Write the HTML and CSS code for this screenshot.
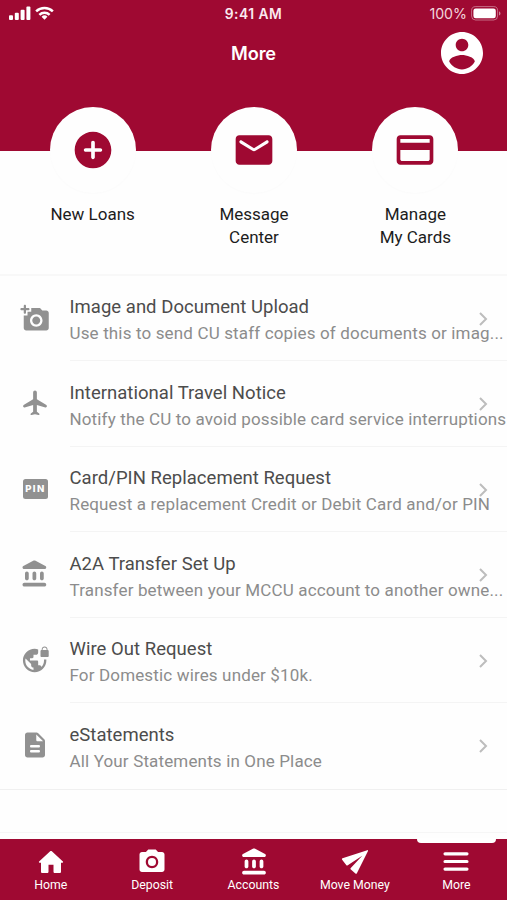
FILE: index.html
```html
<!DOCTYPE html>
<html lang="en">
<head>
  <meta charset="UTF-8" />
  <meta name="viewport" content="width=device-width, initial-scale=1.0"/>
  <title>More</title>
  <link rel="stylesheet" href="styles.css">
</head>
<body>

<div class="app">
  <header class="header">
    <div class="status">
      <div class="status-left">
        <svg class="signal" viewBox="0 0 22 14"><rect x="0" y="9.3" width="4" height="4.7" rx="1"/><rect x="5.8" y="6.8" width="4" height="7.2" rx="1"/><rect x="11.6" y="3.8" width="4" height="10.2" rx="1"/><rect x="17.4" y="0.6" width="4" height="13.4" rx="1"/></svg>
        <svg class="wifi" viewBox="0 0 20 14"><g fill="none" stroke="#fff" stroke-width="2.6"><path d="M1.2 5.4a12.6 12.6 0 0 1 17.6 0"/><path d="M4.6 8.9a7.8 7.8 0 0 1 10.8 0"/></g><path d="M10 14l-3.1-3.1a4.5 4.5 0 0 1 6.2 0z"/></svg>
      </div>
      <div class="time">9:41 AM</div>
      <div class="status-right">
        <span>100%</span>
        <svg class="battery" viewBox="0 0 30 15"><rect x="0.6" y="0.6" width="26" height="13.4" rx="4" fill="none" stroke="#fff" stroke-opacity=".4"/><rect x="2.4" y="2.4" width="22.4" height="9.8" rx="2.3"/><path d="M28 5.2v4.4c2-.8 2-3.6 0-4.4z" opacity=".5"/></svg>
      </div>
    </div>
    <div class="title-bar">
      <h1 class="title">More</h1>
      <svg class="profile" viewBox="2 2 20 20"><path d="M12 2C6.480 2 2 6.480 2 12s4.480 10 10 10 10-4.480 10-10S17.520 2 12 2zm0 3.200c1.660 0 3 1.340 3 3s-1.340 3-3 3-3-1.340-3-3 1.340-3 3-3zm0 14.600c-2.600 0-4.900-1.400-6.100-3.700.1-2 4.100-3.100 6.100-3.100s6 1.100 6.100 3.100c-1.200 2.300-3.500 3.700-6.100 3.700z"/></svg>
    </div>
  </header>

  <!-- Shortcuts -->
  <section class="shortcuts">
    <div class="shortcut">
      <div class="circle"><svg viewBox="0 0 24 24"><path d="M12 2C6.480 2 2 6.480 2 12s4.480 10 10 10 10-4.480 10-10S17.520 2 12 2zm4 11h-3v3c0 .55-.45 1-1 1s-1-.45-1-1v-3H8c-.55 0-1-.45-1-1s.45-1 1-1h3V8c0-.55.45-1 1-1s1 .45 1 1v3h3c.55 0 1 .45 1 1s-.45 1-1 1z"/></svg></div>
      <div class="shortcut-label">New Loans</div>
    </div>
    <div class="shortcut">
      <div class="circle"><svg viewBox="0 0 24 24"><path d="M20 4H4c-1.100 0-2 .9-2 2v12c0 1.100.9 2 2 2h16c1.100 0 2-.9 2-2V6c0-1.100-.9-2-2-2zm-.4 4.250l-6.540 4.090c-.65.41-1.470.41-2.120 0L4.400 8.250c-.25-.16-.4-.43-.4-.72 0-.67.73-1.070 1.300-.72L12 11l6.700-4.190c.57-.35 1.300.05 1.300.72 0 .29-.15.56-.4.72z"/></svg></div>
      <div class="shortcut-label">Message<br>Center</div>
    </div>
    <div class="shortcut">
      <div class="circle"><svg viewBox="0 0 24 24"><path d="M20 4H4c-1.110 0-1.990.89-1.990 2L2 18c0 1.110.89 2 2 2h16c1.110 0 2-.89 2-2V6c0-1.110-.89-2-2-2zm-1 14H5c-.55 0-1-.45-1-1v-5h16v5c0 .55-.45 1-1 1zm1-10H4V6h16v2z"/></svg></div>
      <div class="shortcut-label">Manage<br>My Cards</div>
    </div>
  </section>

  <!-- Services -->
  <ul class="list">
    <li class="item">
      <svg class="item-icon" viewBox="0 0 24 24"><path d="M3 4V2.200c0-.5.4-.9.900-.9s.9.400.900.900V4h1.900c.5 0 .9.400.900.900s-.4.900-.9.900H4.800v1.900c0 .5-.4.900-.9.900S3 8.200 3 7.700V5.800H1.200c-.5 0-.9-.4-.9-.9s.4-.9.900-.9z"/><path d="M6 10V7h3V4h7l1.830 2H21c1.100 0 2 .9 2 2v12c0 1.100-.9 2-2 2H5c-1.100 0-2-.9-2-2V10h3zm7 9c2.760 0 5-2.240 5-5s-2.240-5-5-5-5 2.240-5 5 2.240 5 5 5zm-3.200-5c0 1.770 1.430 3.200 3.200 3.200s3.200-1.430 3.200-3.200-1.430-3.200-3.200-3.200-3.200 1.430-3.200 3.200z"/></svg>
      <div class="item-text">
        <div class="item-title">Image and Document Upload</div>
        <div class="item-desc">Use this to send CU staff copies of documents or imag...</div>
      </div>
      <svg class="chevron" viewBox="0 0 9 14"><path d="M1 1l6 6-6 6"/></svg>
    </li>
    <li class="item">
      <svg class="item-icon" viewBox="0 0 24 24"><path d="M21.500 14.600c0-.5-.3-1-.7-1.200L13.500 9V3.500c0-.83-.67-1.500-1.500-1.500s-1.500.67-1.500 1.500V9l-7.300 4.400c-.4.200-.7.700-.7 1.200 0 .7.600 1.100 1.200.9l6.800-2V19l-1.800 1.300c-.5.4-.3 1.400.5 1.300L12 21l2.800.6c.8.1 1-.9.500-1.300L13.500 19v-5.500l6.800 2c.6.2 1.200-.2 1.200-.9z"/></svg>
      <div class="item-text">
        <div class="item-title">International Travel Notice</div>
        <div class="item-desc">Notify the CU to avoid possible card service interruptions</div>
      </div>
      <svg class="chevron" viewBox="0 0 9 14"><path d="M1 1l6 6-6 6"/></svg>
    </li>
    <li class="item">
      <div class="item-icon pin-wrap"><span class="pin">PIN</span></div>
      <div class="item-text">
        <div class="item-title">Card/PIN Replacement Request</div>
        <div class="item-desc">Request a replacement Credit or Debit Card and/or PIN</div>
      </div>
      <svg class="chevron" viewBox="0 0 9 14"><path d="M1 1l6 6-6 6"/></svg>
    </li>
    <li class="item">
      <svg class="item-icon" viewBox="0 0 24 24"><path d="M4 11.500v4c0 .83.67 1.500 1.500 1.500S7 16.330 7 15.500v-4c0-.83-.67-1.500-1.500-1.500S4 10.670 4 11.500zm6 0v4c0 .83.67 1.500 1.500 1.500s1.500-.67 1.500-1.500v-4c0-.83-.67-1.500-1.500-1.500s-1.500.67-1.500 1.500zM3.500 22h16c.83 0 1.500-.67 1.500-1.500s-.67-1.500-1.500-1.500h-16c-.83 0-1.500.67-1.500 1.500S2.670 22 3.500 22zM16 11.500v4c0 .83.67 1.500 1.500 1.500s1.500-.67 1.500-1.500v-4c0-.83-.67-1.500-1.500-1.500s-1.500.67-1.500 1.500zM10.570 1.490L2.670 5.650c-.41.21-.67.640-.67 1.100C2 7.440 2.560 8 3.250 8h16.510C20.440 8 21 7.440 21 6.750c0-.46-.26-.89-.67-1.100l-7.900-4.160c-.58-.31-1.280-.31-1.860 0z"/></svg>
      <div class="item-text">
        <div class="item-title">A2A Transfer Set Up</div>
        <div class="item-desc">Transfer between your MCCU account to another owne...</div>
      </div>
      <svg class="chevron" viewBox="0 0 9 14"><path d="M1 1l6 6-6 6"/></svg>
    </li>
    <li class="item">
      <svg class="item-icon" viewBox="-1.5 -.3 25.6 25.6"><path d="M22 4v-.5C22 2.120 20.880 1 19.500 1S17 2.120 17 3.500V4c-.55 0-1 .45-1 1v4c0 .55.45 1 1 1h5c.55 0 1-.45 1-1V5c0-.55-.45-1-1-1zm-.8 0h-3.400v-.5c0-.94.760-1.700 1.700-1.700s1.700.76 1.700 1.700V4zm-2.280 8c.04.330.080.660.080 1 0 2.080-.8 3.970-2.100 5.390-.26-.81-1-1.390-1.900-1.390h-1v-3c0-.55-.45-1-1-1H7v-2h2c.55 0 1-.45 1-1V8h2c1.100 0 2-.9 2-2V3.460c-.95-.3-1.950-.46-3-.46C5.480 3 1 7.480 1 13s4.480 10 10 10 10-4.480 10-10c0-.34-.02-.67-.05-1h-2.030zM10 20.930c-3.950-.49-7-3.850-7-7.930 0-.62.080-1.210.210-1.790L8 16v1c0 1.100.9 2 2 2v1.930z"/></svg>
      <div class="item-text">
        <div class="item-title">Wire Out Request</div>
        <div class="item-desc">For Domestic wires under $10k.</div>
      </div>
      <svg class="chevron" viewBox="0 0 9 14"><path d="M1 1l6 6-6 6"/></svg>
    </li>
    <li class="item">
      <svg class="item-icon" viewBox="0 0 24 24"><path d="M14.590 2.590c-.38-.38-.89-.59-1.420-.59H6c-1.100 0-2 .9-2 2v16c0 1.100.89 2 1.990 2H18c1.100 0 2-.9 2-2V8.830c0-.53-.21-1.040-.59-1.410l-4.820-4.830zM15 18H9c-.55 0-1-.45-1-1s.45-1 1-1h6c.55 0 1 .45 1 1s-.45 1-1 1zm0-4H9c-.55 0-1-.45-1-1s.45-1 1-1h6c.55 0 1 .45 1 1s-.45 1-1 1zm-2-6V3.500L18.500 9H14c-.55 0-1-.45-1-1z"/></svg>
      <div class="item-text">
        <div class="item-title">eStatements</div>
        <div class="item-desc">All Your Statements in One Place</div>
      </div>
      <svg class="chevron" viewBox="0 0 9 14"><path d="M1 1l6 6-6 6"/></svg>
    </li>
  </ul>

  <nav class="nav">
    <div class="nav-item">
      <svg viewBox="0 0 24 24"><path d="M10 19.700v-5.500h4v5.500c0 .55.45 1 1 1h4c.55 0 1-.45 1-1V12.500h1.200c.46 0 .68-.57.330-.87L12.670 3.400c-.38-.34-.96-.34-1.340 0l-8.860 8.230c-.34.300-.13.870.330.870H4v7.200c0 .55.45 1 1 1h4c.55 0 1-.45 1-1z"/></svg>
      <span>Home</span>
    </div>
    <div class="nav-item">
      <svg viewBox="0 0 24 24"><path d="M9 2L7.170 4H4c-1.100 0-2 .9-2 2v12c0 1.100.9 2 2 2h16c1.100 0 2-.9 2-2V6c0-1.100-.9-2-2-2h-3.170L15 2H9zm3 15c-2.760 0-5-2.240-5-5s2.240-5 5-5 5 2.240 5 5-2.240 5-5 5z"/><circle cx="12" cy="12" r="3.200"/></svg>
      <span>Deposit</span>
    </div>
    <div class="nav-item">
      <svg viewBox="-.5 0 24 24"><path d="M4 11.500v4c0 .83.67 1.500 1.500 1.500S7 16.330 7 15.500v-4c0-.83-.67-1.500-1.500-1.500S4 10.670 4 11.500zm6 0v4c0 .83.67 1.500 1.500 1.500s1.500-.67 1.500-1.500v-4c0-.83-.67-1.500-1.500-1.500s-1.500.67-1.500 1.500zM3.500 22h16c.83 0 1.500-.67 1.500-1.500s-.67-1.500-1.500-1.500h-16c-.83 0-1.500.67-1.500 1.500S2.670 22 3.500 22zM16 11.500v4c0 .83.67 1.500 1.500 1.500s1.500-.67 1.500-1.500v-4c0-.83-.67-1.500-1.500-1.500s-1.500.67-1.500 1.500zM10.570 1.490L2.670 5.650c-.41.21-.67.640-.67 1.100C2 7.440 2.560 8 3.250 8h16.510C20.440 8 21 7.440 21 6.750c0-.46-.26-.89-.67-1.100l-7.900-4.160c-.58-.31-1.280-.31-1.860 0z"/></svg>
      <span>Accounts</span>
    </div>
    <div class="nav-item">
      <svg viewBox="0 0 24 24"><path d="M21.800 2.500L2 9c-.5.200-.6.600-.3 1.100l3.400 4.400c.3.300.7.400 1.100.1L17.800 7 8.600 16.700c-.4.400-.3.900.1 1.200l3.600 3.300c.5.400 1 .3 1.200-.3L22.400 3.100c.1-.4-.2-.7-.6-.6z"/></svg>
      <span>Move Money</span>
    </div>
    <div class="nav-item active">
      <svg viewBox="0 0 24 24"><path d="M3.200 4.200h17.600a1.200 1.200 0 0 1 0 2.500H3.200a1.200 1.200 0 0 1 0-2.500zM3.200 10.300h17.600a1.200 1.200 0 0 1 0 2.500H3.200a1.200 1.200 0 0 1 0-2.500zM3.200 16.400h17.600a1.200 1.200 0 0 1 0 2.500H3.200a1.200 1.200 0 0 1 0-2.500z"/></svg>
      <span>More</span>
    </div>
  </nav>
</div>

</body>
</html>
```

FILE: styles.css
```css
* {
  box-sizing: border-box;
}
body {
  margin: 0;
  font-family: Roboto, sans-serif;
  background: #fefefe;
}
.app {
  display: flex;
  flex-direction: column;
  height: 900px;
  overflow: hidden;
}

/* Header */
.header {
  height: 151px;
  flex-shrink: 0;
  background: #9f0932;
  color: #fff;
}
.header svg {
  fill: #fff;
}
.status {
  display: grid;
  grid-template-columns: 1fr auto 1fr;
  align-items: center;
  height: 28px;
  padding: 0 6px 0 9px;
  font-family: Inter, sans-serif;
  font-size: 13.8px;
}
.status-left,
.status-right {
  display: flex;
  align-items: center;
}
.status-left {
  gap: 4px;
  padding-bottom: 2px;
}
.status-right {
  justify-content: flex-end;
  gap: 4px;
  padding-bottom: 1px;
}
.status-right span {
  color: #f3d5dd;
  font-size: 14.2px;
}
.signal {
  width: 22px;
  height: 14px;
}
.wifi {
  width: 19px;
  height: 14px;
}
.battery {
  width: 30px;
  height: 15px;
}
.time {
  margin-right: 3px;
  color: #fbeaf0;
  font-weight: 600;
  letter-spacing: 0.5px;
}
.title-bar {
  display: grid;
  grid-template-columns: 1fr auto 1fr;
  align-items: center;
  height: 50px;
  padding: 0 24px;
}
.title {
  grid-column: 2;
  margin: 0;
  font-family: Inter, sans-serif;
  font-size: 18.2px;
  font-weight: 600;
  letter-spacing: -0.1px;
}
.profile {
  justify-self: end;
  width: 42px;
  height: 42px;
  margin-bottom: 1px;
}

/* Shortcuts */
.shortcuts {
  display: flex;
  height: 168.5px;
  flex-shrink: 0;
  margin-top: -44px;
  padding: 0 11px 0 12px;
  border-bottom: 2px solid #f8f8f8;
}
.shortcut {
  flex: 1;
  text-align: center;
}
.circle {
  display: flex;
  justify-content: center;
  align-items: center;
  width: 86px;
  height: 86px;
  margin: 0 auto;
  border-radius: 50%;
  background: #fefefe;
  box-shadow: 0 1px 2px rgba(0, 0, 0, 0.015);
}
.circle svg {
  width: 44px;
  height: 44px;
  fill: #9f0932;
}
.shortcut-label {
  margin-top: 10px;
  color: #1c1c1c;
  font-size: 17px;
  line-height: 22.5px;
}

/* List */
.list {
  margin: 0;
  padding: 0;
  list-style: none;
  border-bottom: 1px solid #f0f0f0;
}
.item {
  display: flex;
  position: relative;
  align-items: center;
  height: 85.5px;
  padding-left: 20px;
}
.item-icon {
  flex-shrink: 0;
  width: 30px;
  height: 30px;
  margin-bottom: 1px;
  fill: #919191;
}
.pin-wrap {
  display: flex;
  justify-content: center;
  align-items: center;
}
.pin {
  width: 25px;
  height: 20px;
  border-radius: 2.5px;
  background: #919191;
  color: #fff;
  font-family: Inter, sans-serif;
  font-size: 9.6px;
  font-weight: 800;
  line-height: 20px;
  letter-spacing: 1.4px;
  text-align: center;
  text-indent: 1px;
}
.item-text {
  flex: 1;
  height: 100%;
  margin-left: 19.5px;
  padding-top: 18.5px;
  border-bottom: 1px solid #f4f4f4;
  white-space: nowrap;
}
.item:last-child .item-text {
  border-bottom: none;
}
.item-title {
  color: #4c4c4c;
  font-size: 18.5px;
  line-height: 26px;
  letter-spacing: 0.03px;
}
.item-desc {
  color: #8c8c8c;
  font-size: 17px;
  line-height: 26px;
  letter-spacing: 0.15px;
}
.chevron {
  position: absolute;
  top: 36px;
  right: 19px;
  width: 9px;
  height: 14px;
  fill: none;
  stroke: #bdbdbd;
  stroke-width: 2;
}

/* Bottom navigation */
.nav {
  display: flex;
  height: 68px;
  flex-shrink: 0;
  margin-top: auto;
  border-top: 1px solid #f6f6f6;
  padding-top: 6px;
  color: #fff;
  background: #9f0932 content-box;
}
.nav-item {
  display: flex;
  position: relative;
  flex: 1;
  flex-direction: column;
  align-items: center;
  padding-top: 8px;
  font-size: 12.3px;
  line-height: 16px;
}
.nav-item svg {
  width: 30px;
  height: 30px;
  fill: #fff;
}
.active::before {
  content: "";
  position: absolute;
  top: -1px;
  width: 79px;
  height: 5px;
  border-radius: 0 0 4px 4px;
  background: #fff;
}
```
